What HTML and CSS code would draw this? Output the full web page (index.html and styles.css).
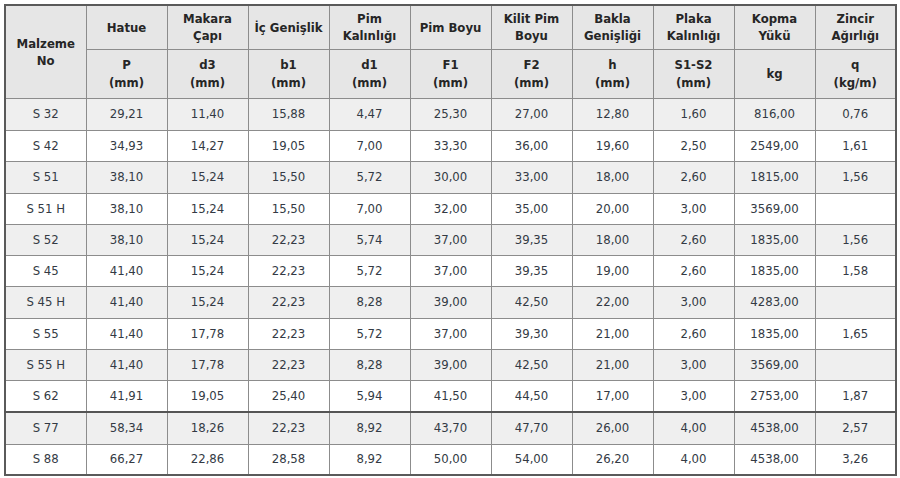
FILE: index.html
```html
<!DOCTYPE html>
<html lang="tr">
<head>
<meta charset="utf-8">
<link rel="stylesheet" href="styles.css">
</head>
<body>
<table class="chain">
<colgroup>
<col span="11" class="c">
</colgroup>
<thead>
<tr class="h1">
<th rowspan="2" class="first">Malzeme<br>No</th>
<th>Hatue</th>
<th>Makara<br>Çapı</th>
<th>İç Genişlik</th>
<th>Pim<br>Kalınlığı</th>
<th>Pim Boyu</th>
<th>Kilit Pim<br>Boyu</th>
<th>Bakla<br>Genişliği</th>
<th>Plaka<br>Kalınlığı</th>
<th>Kopma<br>Yükü</th>
<th>Zincir<br>Ağırlığı</th>
</tr>
<tr class="h2">
<th>P<br>(mm)</th>
<th>d3<br>(mm)</th>
<th>b1<br>(mm)</th>
<th>d1<br>(mm)</th>
<th>F1<br>(mm)</th>
<th>F2<br>(mm)</th>
<th>h<br>(mm)</th>
<th>S1-S2<br>(mm)</th>
<th>kg</th>
<th>q<br>(kg/m)</th>
</tr>
</thead>
<tbody>
<tr class="odd r32"><td>S 32</td><td>29,21</td><td>11,40</td><td>15,88</td><td>4,47</td><td>25,30</td><td>27,00</td><td>12,80</td><td>1,60</td><td>816,00</td><td>0,76</td></tr>
<tr class="r31"><td>S 42</td><td>34,93</td><td>14,27</td><td>19,05</td><td>7,00</td><td>33,30</td><td>36,00</td><td>19,60</td><td>2,50</td><td>2549,00</td><td>1,61</td></tr>
<tr class="odd r32"><td>S 51</td><td>38,10</td><td>15,24</td><td>15,50</td><td>5,72</td><td>30,00</td><td>33,00</td><td>18,00</td><td>2,60</td><td>1815,00</td><td>1,56</td></tr>
<tr class="r31"><td>S 51 H</td><td>38,10</td><td>15,24</td><td>15,50</td><td>7,00</td><td>32,00</td><td>35,00</td><td>20,00</td><td>3,00</td><td>3569,00</td><td></td></tr>
<tr class="odd r31"><td>S 52</td><td>38,10</td><td>15,24</td><td>22,23</td><td>5,74</td><td>37,00</td><td>39,35</td><td>18,00</td><td>2,60</td><td>1835,00</td><td>1,56</td></tr>
<tr class="r31"><td>S 45</td><td>41,40</td><td>15,24</td><td>22,23</td><td>5,72</td><td>37,00</td><td>39,35</td><td>19,00</td><td>2,60</td><td>1835,00</td><td>1,58</td></tr>
<tr class="odd r32"><td>S 45 H</td><td>41,40</td><td>15,24</td><td>22,23</td><td>8,28</td><td>39,00</td><td>42,50</td><td>22,00</td><td>3,00</td><td>4283,00</td><td></td></tr>
<tr class="r31"><td>S 55</td><td>41,40</td><td>17,78</td><td>22,23</td><td>5,72</td><td>37,00</td><td>39,30</td><td>21,00</td><td>2,60</td><td>1835,00</td><td>1,65</td></tr>
<tr class="odd r31"><td>S 55 H</td><td>41,40</td><td>17,78</td><td>22,23</td><td>8,28</td><td>39,00</td><td>42,50</td><td>21,00</td><td>3,00</td><td>3569,00</td><td></td></tr>
<tr class="r32 dark"><td>S 62</td><td>41,91</td><td>19,05</td><td>25,40</td><td>5,94</td><td>41,50</td><td>44,50</td><td>17,00</td><td>3,00</td><td>2753,00</td><td>1,87</td></tr>
<tr class="odd r32"><td>S 77</td><td>58,34</td><td>18,26</td><td>22,23</td><td>8,92</td><td>43,70</td><td>47,70</td><td>26,00</td><td>4,00</td><td>4538,00</td><td>2,57</td></tr>
<tr class="r31"><td>S 88</td><td>66,27</td><td>22,86</td><td>28,58</td><td>8,92</td><td>50,00</td><td>54,00</td><td>26,20</td><td>4,00</td><td>4538,00</td><td>3,26</td></tr>
</tbody>
</table>
</body>
</html>
```
FILE: styles.css
```css
html, body {
  margin: 0;
  padding: 0;
  background: #ffffff;
}

body {
  padding: 4px 0 0 4px;
}

.chain {
  border-collapse: collapse;
  table-layout: fixed;
  width: 892px;
  border: 2px solid #5a5a5a;
  font-family: "Liberation Sans Narrow", "DejaVu Sans Condensed", "Liberation Sans", sans-serif;
  color: #333a44;
}

.chain .c {
  width: 81px;
}

.chain th,
.chain td {
  border: 1px solid #8c8c8c;
  text-align: center;
  vertical-align: middle;
  padding: 0;
}

.chain th {
  background: #e6e6e6;
  font-size: 13px;
  font-weight: bold;
  line-height: 17px;
  color: #262626;
}

.chain .h2 th {
  line-height: 18px;
}

.chain .h1 {
  height: 44px;
}

.chain .h2 {
  height: 49px;
}

.chain td {
  font-size: 13px;
  line-height: 16px;
}

.chain .r31 {
  height: 31px;
}

.chain .r32 {
  height: 32px;
}

.chain .odd td {
  background: #efefef;
}

.chain .dark td {
  border-bottom: 2px solid #555555;
}
```
